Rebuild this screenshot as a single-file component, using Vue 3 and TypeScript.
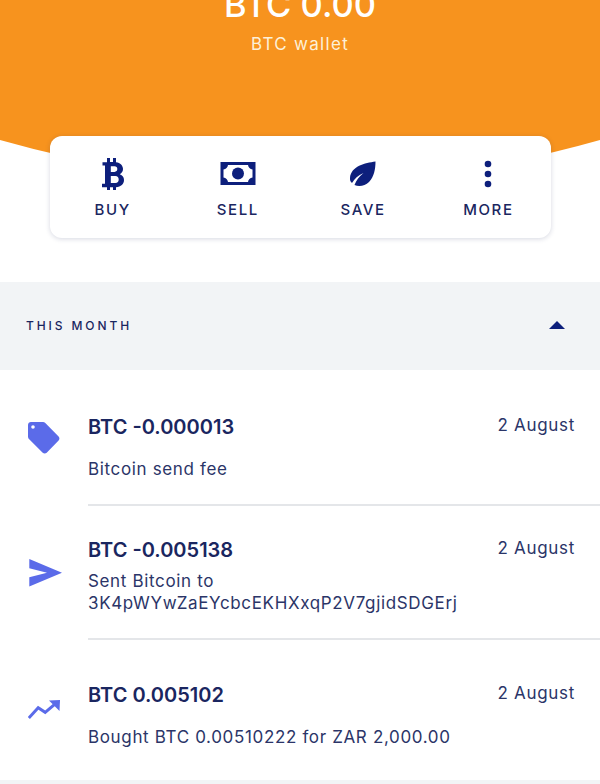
<template>
  <div class="page">
    <header class="hero">
      <div class="balance">BTC 0.00</div>
      <div class="wallet">BTC wallet</div>
    </header>

    <nav class="actions">
      <div class="action">
        <svg class="action-icon" width="36" height="32" viewBox="0 0 36 32">
          <path
            fill="#0d1f7c"
            fill-rule="evenodd"
            d="M12 0h3v4h3V0h3v4.200c4.400.6 7 3.300 7 6.900 0 2.400-1.200 4.200-3.200 5.100 2.700.9 4.200 3 4.200 5.800 0 4.200-3 6.800-8 7.200V32h-3v-2.800h-3V32h-3v-2.800H7v-3.400h3V7.600H7.500V4.200H12V0zm3.800 8.300v5.600h3.700c1.800 0 2.800-1 2.800-2.800s-1-2.800-2.800-2.800h-3.700zm0 9.800v7h4.700c2 0 3.200-1.400 3.200-3.500s-1.200-3.500-3.200-3.500h-4.700z"
          />
        </svg>
        <span>BUY</span>
      </div>
      <div class="action">
        <svg class="action-icon" width="36" height="32" viewBox="0 0 36 32">
          <rect x="0.500" y="4" width="35" height="23" fill="#0d1f7c" />
          <path
            fill="#fff"
            d="M8 7h20c.4 2.500 2 4 4.500 4.500v8c-2.500.5-4.100 2-4.500 4.500H8c-.4-2.500-2-4-4.500-4.500v-8C6 11 7.600 9.500 8 7z"
          />
          <circle cx="18" cy="15.500" r="6" fill="#0d1f7c" />
        </svg>
        <span>SELL</span>
      </div>
      <div class="action">
        <svg class="action-icon" width="36" height="32" viewBox="0 0 36 32">
          <path
            fill="#0d1f7c"
            d="M30.500 3.500C20 5 6 8 5 20c-.2 2 .5 4 2 5 2.500-4.500 6-7.500 11.500-10-4.500 3.500-7 7-9 12 4.500 2 10.500 1 14.500-3 5-5 6.500-13 6.500-20.500z"
          />
        </svg>
        <span>SAVE</span>
      </div>
      <div class="action">
        <svg class="action-icon" width="36" height="32" viewBox="0 0 36 32">
          <circle cx="18" cy="6" r="3.300" fill="#0d1f7c" />
          <circle cx="18" cy="16" r="3.300" fill="#0d1f7c" />
          <circle cx="18" cy="26" r="3.300" fill="#0d1f7c" />
        </svg>
        <span>MORE</span>
      </div>
    </nav>

    <section class="month">
      <span>THIS MONTH</span>
      <i class="caret"></i>
    </section>

    <ul class="list">
      <li v-for="tx in transactions" :key="tx.title" class="row" :class="tx.kind">
        <div class="row-icon">
          <svg v-if="tx.kind === 'fee'" width="32" height="32" viewBox="0 0 32 32">
            <path
              fill="#5b6be9"
              fill-rule="evenodd"
              d="M3 0h12c.9 0 1.700.4 2.300 1L30.600 14.500c1.100 1.100 1.100 2.900 0 4L18.700 30.700c-1.100 1.100-2.900 1.100-4 0L1.200 17.300C.5 16.600 0 15.700 0 14.700V3c0-1.700 1.300-3 3-3zm2 3.200a1.800 1.800 0 1 0 0 3.600 1.800 1.800 0 0 0 0-3.600z"
            />
          </svg>
          <svg v-else-if="tx.kind === 'sent'" width="34" height="28" viewBox="0 0 34 28">
            <path fill="#5b6be9" d="M1.300 0L34 13.800 1.300 27.600v-9.300L19 13.800 1.300 9.300z" />
          </svg>
          <svg v-else width="32" height="20" viewBox="0 0 32 20">
            <path fill="none" stroke="#5b6be9" stroke-width="3" d="M.8 18l9.400-10.300 7 4.600L29 2.400" />
            <path fill="#5b6be9" d="M21 .5L32 0l-.5 11z" />
          </svg>
        </div>
        <div class="row-body">
          <div class="row-top">
            <span class="amount">{{ tx.title }}</span>
            <span class="date">{{ tx.date }}</span>
          </div>
          <p class="detail">
            <template v-for="(line, i) in tx.lines" :key="i">
              {{ line }}<br v-if="i < tx.lines.length - 1" />
            </template>
          </p>
        </div>
      </li>
    </ul>
    <div class="band"></div>
  </div>
</template>

<script setup lang="ts">
interface Transaction {
  kind: 'fee' | 'sent' | 'bought'
  title: string
  date: string
  lines: string[]
}

const transactions: Transaction[] = [
  { kind: 'fee', title: 'BTC -0.000013', date: '2 August', lines: ['Bitcoin send fee'] },
  {
    kind: 'sent',
    title: 'BTC -0.005138',
    date: '2 August',
    lines: ['Sent Bitcoin to', '3K4pWYwZaEYcbcEKHXxqP2V7gjidSDGErj'],
  },
  {
    kind: 'bought',
    title: 'BTC 0.005102',
    date: '2 August',
    lines: ['Bought BTC 0.00510222 for ZAR 2,000.00'],
  },
]
</script>

<style>
html,
body {
  margin: 0;
  background: #fff;
}
</style>

<style scoped>
.page {
  width: 600px;
  height: 784px;
  overflow: hidden;
  background: #fff;
  font-family: Inter, 'Liberation Sans', sans-serif;
  color: #1a2660;
}
.hero {
  display: flow-root;
  height: 183px;
  background: #f7931e;
  color: #fff;
  text-align: center;
  clip-path: path('M0 0H600V140Q300 225 0 140Z');
}
.balance {
  margin-top: -15px;
  font-size: 34.500px;
  line-height: 40px;
  font-weight: 500;
}
.wallet {
  margin-top: 8px;
  font-size: 17px;
  line-height: 22px;
  letter-spacing: 1.300px;
  color: #fdf0d8;
}
.actions {
  position: relative;
  display: grid;
  grid-template-columns: repeat(4, 1fr);
  width: 501px;
  height: 102px;
  margin: -47px 0 0 50px;
  background: #fff;
  border-radius: 12px;
  box-shadow: 0 1px 5px rgba(30, 40, 90, 0.18);
}
.action {
  display: flex;
  flex-direction: column;
  align-items: center;
  padding-top: 22px;
  font-size: 15px;
  line-height: 18px;
  font-weight: 500;
  letter-spacing: 1.600px;
}
.action-icon {
  display: block;
  margin-bottom: 11px;
}
.month {
  display: flex;
  align-items: center;
  justify-content: space-between;
  box-sizing: border-box;
  height: 88px;
  margin-top: 44px;
  padding: 0 35px 2px 26px;
  background: #f2f4f6;
  font-size: 12px;
  font-weight: 500;
  letter-spacing: 2.900px;
}
.caret {
  width: 0;
  height: 0;
  border-left: 8px solid transparent;
  border-right: 8px solid transparent;
  border-bottom: 8px solid #0d1f7c;
}
.list {
  margin: 0;
  padding: 0;
  list-style: none;
  background: #fff;
}
.row {
  display: flex;
  align-items: stretch;
}
.row-icon {
  flex: 0 0 60px;
  display: flex;
  align-items: center;
  padding-left: 28px;
}
.row-body {
  flex: 1;
  padding-right: 25px;
  border-bottom: 2px solid #e4e6e9;
}
.row:last-child .row-body {
  border-bottom: 0;
}
.row-top {
  display: flex;
  justify-content: space-between;
  align-items: flex-start;
}
.amount {
  font-size: 20px;
  line-height: 24px;
  font-weight: 600;
}
.date {
  font-size: 17px;
  line-height: 20px;
  letter-spacing: 0.700px;
  color: #2b3568;
}
.detail {
  margin: 19px 0 0;
  font-size: 17px;
  line-height: 22px;
  letter-spacing: 0.650px;
  color: #2b3568;
}
.fee .row-body {
  padding-top: 45px;
  padding-bottom: 24px;
}
.sent .row-body {
  padding-top: 32px;
  padding-bottom: 24px;
}
.sent .detail {
  margin-top: 8px;
}
.bought .row-body {
  padding-top: 43px;
  padding-bottom: 32px;
}
.band {
  height: 4px;
  background: #f2f4f6;
}
</style>
